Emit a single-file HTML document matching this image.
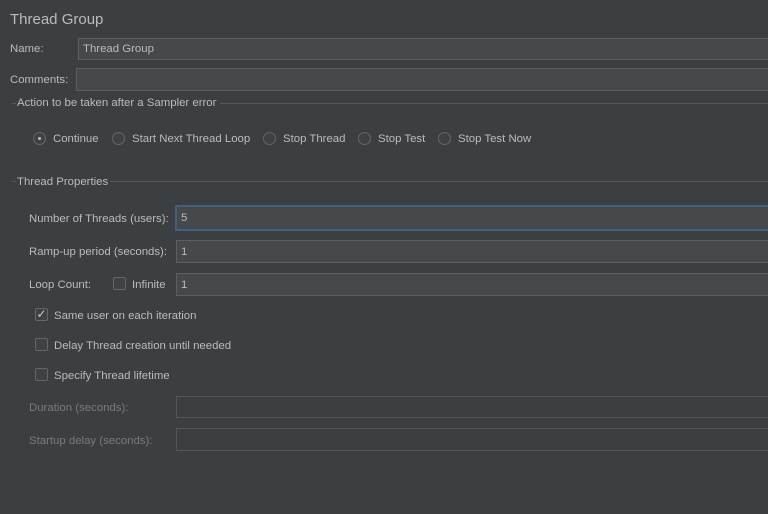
<!DOCTYPE html><html><head><style>
body{margin:0;width:768px;height:514px;background:#3c3f41;font-family:"Liberation Sans",sans-serif;color:#bbbbbb;font-size:11.4px;position:relative;overflow:hidden}
.a{position:absolute;white-space:nowrap}
.f{position:absolute;background:#45494a;border:1px solid #5e6060;box-sizing:border-box;right:-2px;padding-left:4px;color:#bbb;font-size:11.4px;display:flex;align-items:center}
.line{position:absolute;height:1px;background:#555758;right:0}
.r{position:absolute;width:13px;height:13px;border:1px solid #666;border-radius:50%;box-sizing:border-box;background:#3f4244}
.c{position:absolute;width:13px;height:13px;border:1px solid #666;border-radius:2px;box-sizing:border-box;background:#3f4244}
.d{color:#7a7a7a}
</style></head><body>
<div class="a" style="left:10px;top:11px;font-size:15px">Thread Group</div>
<div class="a" style="left:10px;top:43px">Name:</div>
<div class="f" style="left:78px;top:38px;height:22px">Thread Group</div>
<div class="a" style="left:10px;top:74px">Comments:</div>
<div class="f" style="left:76px;top:68px;height:23px"></div>
<div class="line" style="left:12px;top:103px;width:4px"></div>
<div class="a" style="left:17px;top:97px">Action to be taken after a Sampler error</div>
<div class="line" style="left:220px;top:103px"></div>
<div class="r" style="left:33px;top:132px"><div style="position:absolute;left:4px;top:4px;width:3px;height:3px;border-radius:50%;background:#bbb"></div></div>
<div class="a" style="left:53px;top:133px">Continue</div>
<div class="r" style="left:112px;top:132px"></div>
<div class="a" style="left:132px;top:133px">Start Next Thread Loop</div>
<div class="r" style="left:263px;top:132px"></div>
<div class="a" style="left:283px;top:133px">Stop Thread</div>
<div class="r" style="left:358px;top:132px"></div>
<div class="a" style="left:378px;top:133px">Stop Test</div>
<div class="r" style="left:438px;top:132px"></div>
<div class="a" style="left:458px;top:133px">Stop Test Now</div>
<div class="line" style="left:12px;top:181px;width:4px"></div>
<div class="a" style="left:17px;top:176px">Thread Properties</div>
<div class="line" style="left:110px;top:181px"></div>
<div class="a" style="left:29px;top:213px">Number of Threads (users):</div>
<div class="f" style="left:175px;top:205px;height:26px;border:2px solid #3d6185">5</div>
<div class="a" style="left:29px;top:246px">Ramp-up period (seconds):</div>
<div class="f" style="left:176px;top:240px;height:23px">1</div>
<div class="a" style="left:29px;top:279px">Loop Count:</div>
<div class="c" style="left:113px;top:277px"></div>
<div class="a" style="left:132px;top:279px">Infinite</div>
<div class="f" style="left:176px;top:273px;height:23px">1</div>
<div class="c" style="left:35px;top:308px;font-size:12px;line-height:11px;text-align:center;color:#ccc">✓</div>
<div class="a" style="left:54px;top:310px">Same user on each iteration</div>
<div class="c" style="left:35px;top:338px"></div>
<div class="a" style="left:54px;top:340px">Delay Thread creation until needed</div>
<div class="c" style="left:35px;top:368px"></div>
<div class="a" style="left:54px;top:370px">Specify Thread lifetime</div>
<div class="a d" style="left:29px;top:402px">Duration (seconds):</div>
<div class="f" style="left:176px;top:396px;height:22px;background:#3c3f41;border-color:#555"></div>
<div class="a d" style="left:29px;top:435px">Startup delay (seconds):</div>
<div class="f" style="left:176px;top:428px;height:23px;background:#3c3f41;border-color:#555"></div>
</body></html>
